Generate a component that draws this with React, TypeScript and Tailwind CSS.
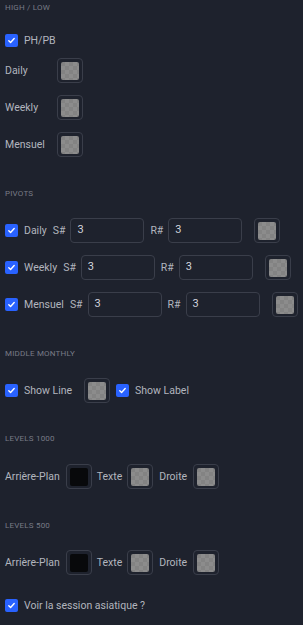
import React from "react";

const font = { fontFamily: 'Roboto, "Noto Sans", sans-serif' };

function Check() {
  return (
    <div className="w-[13px] h-[13px] rounded-[2px] bg-[#2962ff] flex items-center justify-center shrink-0">
      <svg width="9" height="9" viewBox="0 0 9 9" fill="none">
        <path d="M1.8 4.7 L3.6 6.4 L7.2 2.6" stroke="#ffffff" strokeWidth="1.4" strokeLinecap="round" strokeLinejoin="round" />
      </svg>
    </div>
  );
}

function Swatch({ dark = false, className = "" }: { dark?: boolean; className?: string }) {
  return (
    <div className={"w-[26px] h-[25px] rounded-[4px] border border-[#3a3e4a] flex items-center justify-center shrink-0 " + className}>
      {dark ? (
        <div className="w-[18px] h-[18px] rounded-[2px] bg-[#08090b]" />
      ) : (
        <div className="w-[18px] h-[18px] rounded-[2px] bg-[repeating-conic-gradient(#8c8c8c_0%_25%,#838383_0%_50%)] bg-[length:8px_8px]" />
      )}
    </div>
  );
}

function Heading({ children, className = "" }: { children: React.ReactNode; className?: string }) {
  return (
    <div className={"h-4 flex items-center text-[8px] tracking-[0.2px] text-[#787b86] uppercase " + className}>{children}</div>
  );
}

function Input({ className = "" }: { className?: string }) {
  return (
    <div className={"w-[74px] h-[25px] rounded-[4px] border border-[#3a3e4a] flex items-center pl-[6px] text-[11px] text-[#d1d4dc] shrink-0 " + className}>
      3
    </div>
  );
}

function PivotRow({ label, className = "" }: { label: string; className?: string }) {
  return (
    <div className={"h-[25px] flex items-center " + className}>
      <Check />
      <span className="ml-[6px]">{label}</span>
      <span className="ml-[6px]">S#</span>
      <Input className="ml-[5px]" />
      <span className="ml-[6px]">R#</span>
      <Input className="ml-[5px]" />
      <Swatch className="ml-[12px]" />
    </div>
  );
}

export default function App() {
  return (
    <div style={font} className="w-[303px] h-[625px] bg-[#1e222d] text-[10.5px] text-[#b2b5be] pl-[5px] flex flex-col overflow-hidden">
      <Heading>High / Low</Heading>
      <div className="h-[13px] mt-[18px] flex items-center">
        <Check />
        <span className="ml-[6px]">PH/PB</span>
      </div>
      {["Daily", "Weekly", "Mensuel"].map((l, i) => (
        <div key={l} className={"h-[25px] flex items-center " + (i === 0 ? "mt-[11px]" : "mt-[12px]")}>
          <span className="w-[52px]">{l}</span>
          <Swatch />
        </div>
      ))}
      <Heading className="mt-[29px]">Pivots</Heading>
      <PivotRow label="Daily" className="mt-[16px]" />
      <PivotRow label="Weekly" className="mt-[12px]" />
      <PivotRow label="Mensuel" className="mt-[12px]" />
      <Heading className="mt-[29px]">Middle Monthly</Heading>
      <div className="h-[25px] mt-[16px] flex items-center">
        <Check />
        <span className="ml-[6px]">Show Line</span>
        <Swatch className="ml-[12px]" />
        <div className="ml-[6px]">
          <Check />
        </div>
        <span className="ml-[6px]">Show Label</span>
      </div>
      <Heading className="mt-[28px]">Levels 1000</Heading>
      <div className="h-[25px] mt-[17px] flex items-center">
        <span>Arrière-Plan</span>
        <Swatch dark className="ml-[6px]" />
        <span className="ml-[5px]">Texte</span>
        <Swatch className="ml-[5px]" />
        <span className="ml-[6px]">Droite</span>
        <Swatch className="ml-[6px]" />
      </div>
      <Heading className="mt-[29px]">Levels 500</Heading>
      <div className="h-[25px] mt-[16px] flex items-center">
        <span>Arrière-Plan</span>
        <Swatch dark className="ml-[6px]" />
        <span className="ml-[5px]">Texte</span>
        <Swatch className="ml-[5px]" />
        <span className="ml-[6px]">Droite</span>
        <Swatch className="ml-[6px]" />
      </div>
      <div className="h-[13px] mt-[24px] flex items-center">
        <Check />
        <span className="ml-[6px]">Voir la session asiatique ?</span>
      </div>
    </div>
  );
}
